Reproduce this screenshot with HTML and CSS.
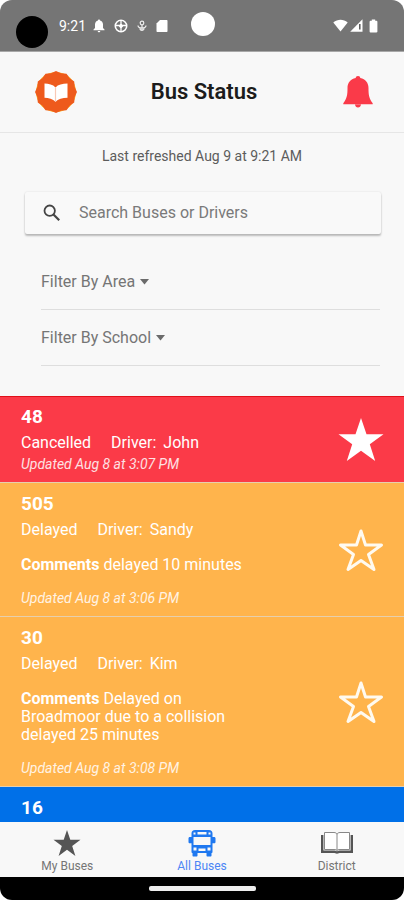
FILE: index.html
```html
<!DOCTYPE html>
<html lang="en">
<head>
<meta charset="utf-8">
<meta name="viewport" content="width=device-width, initial-scale=1">
<title>Bus Status</title>
<link rel="stylesheet" href="styles.css">
</head>
<body>
<div class="app">
  <div class="statusbar">
    <span class="lens"></span>
    <time class="clock">9:21</time>
    <div class="notices">
      <svg width="12" height="14" viewBox="0 0 12 14" fill="#fff"><path d="M6 0.5c.7 0 1 .5 1 1C9 2 10 3.600 10 5.500V9l1.500 1.500v.8H.5v-.8L2 9V5.500C2 3.600 3 2 5 1.500c0-.5.3-1 1-1zM4.700 12h2.600c0 .8-.6 1.300-1.300 1.300S4.700 12.800 4.700 12z"/></svg>
      <svg width="14" height="14" viewBox="0 0 14 14" fill="none" stroke="#fff"><circle cx="7" cy="7" r="5.700" stroke-width="1.600"/><path d="M1.500 6.500h11M7 2v10.500" stroke-width="1.300"/><circle cx="7" cy="7" r="1.500" fill="#fff"/></svg>
      <svg width="10" height="14" viewBox="0 0 10 14" fill="none" stroke="#eee" stroke-width="1.200"><circle cx="5" cy="4" r="1.800"/><path d="M5 6v5M1 6.500c0 2 2 2.500 4 2.500s4-.5 4-2.500M3 9.500c0 2.500 4 2.500 4 0"/></svg>
      <svg width="12" height="14" viewBox="0 0 12 14" fill="#fff"><path d="M4 1h6.500c.6 0 1 .4 1 1v10c0 .6-.4 1-1 1h-9c-.6 0-1-.4-1-1V4.500z"/></svg>
    </div>
    <span class="camera"></span>
    <div class="signals">
      <svg width="15" height="13" viewBox="0 0 15 13" fill="#fff"><path d="M.3 3.500C4.500-.3 10.500-.3 14.700 3.500L7.500 12.500z"/></svg>
      <svg width="13" height="13" viewBox="0 0 13 13"><path d="M12.500.3v12.400H.2z" fill="#fff"/><path d="M9.800 5v5.500" stroke="#555" stroke-width="1.500"/></svg>
      <svg width="9" height="14" viewBox="0 0 9 14" fill="#fff"><path d="M2.800.5h3.400v1.300h1.300c.5 0 .9.4.9.9v9.900c0 .5-.4.9-.9.900h-6c-.5 0-.9-.4-.9-.9V2.700c0-.5.400-.9.900-.9h1.300z"/></svg>
    </div>
  </div>

  <header class="header">
    <a class="logo" href="#" aria-label="Home">
      <svg width="42" height="42" viewBox="0 0 42 42"><circle cx="21" cy="21" r="20" fill="#fbb829"/><path fill="#ee5a1c" d="M21 0l5 2.300 5.500.5 3.200 4.500 4.500 3.200.5 5.500L42 21l-2.300 5-.5 5.500-4.500 3.200-3.200 4.500-5.500.5L21 42l-5-2.300-5.500-.5-3.200-4.500-4.500-3.200-.5-5.500L0 21l2.300-5 .5-5.500 4.500-3.200 3.200-4.500 5.500-.5z"/><path fill="#fff" d="M9.500 12.500c4 0 8.500 1 11 4 2.500-3 7-4 12-4v14.200c-5 0-9.500 1.300-12 4.100-2.500-2.800-7-4.100-11-4.100z"/><path d="M20.500 16.500v14" stroke="#f9c9b5" stroke-width="1.200"/></svg>
    </a>
    <h1 class="title">Bus Status</h1>
    <button class="alerts" type="button" aria-label="Alerts">
      <svg width="30" height="32" viewBox="0 0 30 32" fill="#fa3a49"><path d="M15 0c1.500 0 2.200.9 2.300 2.100C22.500 3.200 25.500 7 25.500 12c0 6.500.5 10.500 4.200 15.200v1H.3v-1C4 22.500 4.500 18.500 4.500 12c0-5 3-8.800 8.200-9.900C12.800.9 13.500 0 15 0zM12 28.500h6c-.3 2-1.300 3-3 3s-2.700-1-3-3z"/></svg>
    </button>
  </header>

  <main class="content">
    <p class="refreshed">Last refreshed Aug 9 at 9:21 AM</p>
    <label class="search">
      <svg width="18" height="18" viewBox="0 0 18 18" fill="none" stroke="#444"><circle cx="6.700" cy="6.700" r="5.200" stroke-width="1.800"/><path d="M10.500 10.500l5.700 5.700" stroke-width="2.200"/></svg>
      <input type="search" placeholder="Search Buses or Drivers" aria-label="Search buses or drivers">
    </label>
    <div class="filters">
      <div class="filter">
        <select aria-label="Filter by area"><option>Filter By Area</option></select>
        <svg width="9" height="6" viewBox="0 0 9 6" fill="#6b6b6b"><path d="M0 0h9L4.500 5.500z"/></svg>
      </div>
      <div class="filter">
        <select aria-label="Filter by school"><option>Filter By School</option></select>
        <svg width="9" height="6" viewBox="0 0 9 6" fill="#6b6b6b"><path d="M0 0h9L4.500 5.500z"/></svg>
      </div>
    </div>

    <ul class="buses">
      <li class="bus cancelled">
        <div class="info">
          <h2>48</h2>
          <p class="state"><span>Cancelled</span><span class="driver"><span>Driver:</span><span>John</span></span></p>
          <p class="updated">Updated Aug 8 at 3:07 PM</p>
        </div>
        <button class="star" type="button" aria-label="Remove bus 48 from My Buses">
          <svg width="46" height="44" viewBox="0 0 46 44"><path fill="#fff" d="M23 0l5.500 16.200H45.500L31.800 26.300 37.200 43 23 32.800 8.800 43l5.400-16.700L.5 16.200h17z"/></svg>
        </button>
      </li>
      <li class="bus delayed">
        <div class="info">
          <h2>505</h2>
          <p class="state"><span>Delayed</span><span class="driver"><span>Driver:</span><span>Sandy</span></span></p>
          <p class="comments"><strong>Comments</strong> delayed 10 minutes</p>
          <p class="updated">Updated Aug 8 at 3:06 PM</p>
        </div>
        <button class="star" type="button" aria-label="Add bus 505 to My Buses">
          <svg width="46" height="44" viewBox="0 0 46 44"><path fill="none" stroke="#fffaf0" stroke-width="3" stroke-linejoin="round" d="M23 3l4.500 14H43.500L30.500 26.500 36 41.500 23 32.500 10 41.500l5.500-15L2.500 17h16z"/></svg>
        </button>
      </li>
      <li class="bus delayed">
        <div class="info">
          <h2>30</h2>
          <p class="state"><span>Delayed</span><span class="driver"><span>Driver:</span><span>Kim</span></span></p>
          <p class="comments"><strong>Comments</strong> Delayed on Broadmoor due to a collision delayed 25 minutes</p>
          <p class="updated">Updated Aug 8 at 3:08 PM</p>
        </div>
        <button class="star" type="button" aria-label="Add bus 30 to My Buses">
          <svg width="46" height="44" viewBox="0 0 46 44"><path fill="none" stroke="#fffaf0" stroke-width="3" stroke-linejoin="round" d="M23 3l4.500 14H43.500L30.500 26.500 36 41.500 23 32.500 10 41.500l5.500-15L2.500 17h16z"/></svg>
        </button>
      </li>
      <li class="bus ontime">
        <div class="info">
          <h2>16</h2>
        </div>
      </li>
    </ul>
  </main>

  <nav class="tabs">
    <a href="#" class="tab">
      <svg width="28" height="28" viewBox="0 0 28 28" fill="#555"><path d="M14 1l3.300 9.800H27.500l-8.300 6.100 3.200 10L14 20.800 5.600 26.900l3.200-10L.5 10.800h10.200z"/></svg>
      <span>My Buses</span>
    </a>
    <a href="#" class="tab active">
      <svg width="28" height="28" viewBox="0 0 28 28"><path fill="#1f78f0" fill-rule="evenodd" d="M7 1h14c2.200 0 3.500 1.500 3.500 3.500V8H26c1 0 1.500.5 1.500 1.500V13c0 .8-.5 1.300-1.300 1.300H24.500V23c0 .6-.5 1-1 1v2.500c0 .6-.4 1-1 1h-3c-.6 0-1-.4-1-1V24h-9v2.500c0 .6-.4 1-1 1h-3c-.6 0-1-.4-1-1V24c-.5 0-1-.4-1-1v-8.700H1.800c-.8 0-1.300-.5-1.300-1.300V9.500C.5 8.500 1 8 2 8h1.500V4.500C3.500 2.500 4.800 1 7 1zM9.500 3v2.500h9V3zM5.500 3.500v2h2v-2zM20.500 3.500v2h2v-2zM5.500 8v8h17V8zM5.500 18.500v3h3v-3zM19.500 18.500v3h3v-3zM10.500 19.500v2.500h7v-2.500z"/></svg>
      <span>All Buses</span>
    </a>
    <a href="#" class="tab">
      <svg width="32" height="28" viewBox="0 0 32 28"><path d="M1.200 6v16.800h12.300c1 0 1.500.7 2.500.7s1.500-.7 2.500-.7h12.300V6" fill="none" stroke="#555" stroke-width="2.400"/><path d="M3.500 3.500h9.500c1.500 0 3 .8 3 2 0-1.200 1.500-2 3-2h9.500V20.500H19c-1.500 0-3 .4-3 1 0-.6-1.500-1-3-1H3.500zM16 5.500v16" fill="#fff" stroke="#888" stroke-width="1"/></svg>
      <span>District</span>
    </a>
  </nav>
  <div class="gesture"><span class="handle"></span></div>
</div>
</body>
</html>
```
FILE: styles.css
```css
* { box-sizing: border-box; }

body, h1, h2, p, ul { margin: 0; padding: 0; }

body {
  background: #fff;
  font-family: Roboto, "Liberation Sans", sans-serif;
}

button { padding: 0; border: 0; background: none; }
svg { display: block; flex: none; }

.app {
  display: flex;
  flex-direction: column;
  height: 100vh;
  overflow: hidden;
  border-radius: 12px;
  background: #f8f8f8;
}

/* System status bar */
.statusbar {
  position: relative;
  flex: none;
  display: flex;
  align-items: center;
  height: 52px;
  padding: 0 26px 0 16px;
  border-bottom: 1px solid #a8a8a8;
  background: #757575;
  color: #fff;
}
.lens {
  width: 32px;
  height: 32px;
  margin: 12px 11px 0 0;
  border-radius: 50%;
  background: #000;
}
.clock { font-size: 14px; line-height: 16px; }
.notices {
  display: flex;
  align-items: center;
  gap: 9px;
  margin-left: 7px;
}
.camera {
  position: absolute;
  top: 12px;
  left: 50%;
  width: 24px;
  height: 24px;
  margin-left: -11px;
  border-radius: 50%;
  background: #fff;
}
.signals {
  display: flex;
  align-items: center;
  gap: 2px;
  margin-left: auto;
}
.signals svg:last-child { margin-left: 4px; }

/* Page header */
.header {
  flex: none;
  display: grid;
  grid-template-columns: 1fr auto 1fr;
  align-items: center;
  height: 81px;
  padding: 0 31px 0 35px;
  border-bottom: 1px solid #e6e6e6;
}
.title {
  color: #1c1c1c;
  font-size: 22px;
  font-weight: 600;
  line-height: 28px;
}
.alerts { justify-self: end; }

/* Search and filters */
.content {
  flex: 1;
  min-height: 0;
  overflow: hidden;
}
.refreshed {
  padding-top: 13px;
  color: #5c5c5c;
  font-size: 14px;
  line-height: 20px;
  text-align: center;
}
.search {
  display: flex;
  align-items: center;
  gap: 18px;
  height: 42px;
  margin: 26px 23px 0 25px;
  padding: 0 18px;
  border-radius: 2px;
  box-shadow: 0 2px 2px rgba(0, 0, 0, .24), 0 0 2px rgba(0, 0, 0, .12);
  background: #f9f9f9;
}
.search input {
  flex: 1;
  min-width: 0;
  padding: 0;
  border: 0;
  outline: 0;
  background: none;
  color: #444;
  font: 16px/20px Roboto, "Liberation Sans", sans-serif;
}
.search input::placeholder { color: #7a7a7a; opacity: 1; }
.filters { padding: 20px 24px 30px 41px; }
.filter {
  display: flex;
  align-items: center;
  gap: 4px;
  height: 56px;
  border-bottom: 1px solid #dedede;
}
.filter select {
  appearance: none;
  padding: 0;
  border: 0;
  background: none;
  color: #757575;
  font: 16px/20px Roboto, "Liberation Sans", sans-serif;
}

/* Bus list */
.buses { list-style: none; }
.bus {
  display: flex;
  align-items: center;
  justify-content: space-between;
  padding: 10px 20px 9px 21px;
  border-bottom: 1px solid #e6cfae;
  color: #fff;
}
.cancelled {
  background: #fb3a48;
  box-shadow: inset 0 1px 0 #e01018;
}
.delayed { background: #ffb44c; }
.ontime { background: #0070e8; }
.info { max-width: 228px; }
.info h2 {
  font-size: 19px;
  font-weight: 700;
  line-height: 21px;
}
.state {
  display: flex;
  gap: 20px;
  margin-top: 6px;
  font-size: 16px;
  line-height: 20px;
}
.driver { display: flex; gap: 7px; }
.comments {
  margin: 16px 0 15px;
  font-size: 16px;
  line-height: 18px;
}
.updated {
  font-size: 14px;
  font-style: italic;
  line-height: 18px;
  opacity: .85;
}
.state + .updated { margin-top: 2px; }

/* Bottom navigation */
.tabs {
  flex: none;
  display: flex;
  height: 55px;
  background: #f8f8f8;
}
.tab {
  flex: 1;
  display: flex;
  flex-direction: column;
  align-items: center;
  padding-top: 7px;
  color: #757575;
  font-size: 12px;
  line-height: 18px;
  text-decoration: none;
}
.tab.active { color: #4c86f5; }
.gesture {
  flex: none;
  display: flex;
  justify-content: center;
  height: 23px;
  padding-top: 9px;
  background: #000;
}
.handle {
  width: 107px;
  height: 5px;
  border-radius: 2px;
  background: #eee;
}
```
